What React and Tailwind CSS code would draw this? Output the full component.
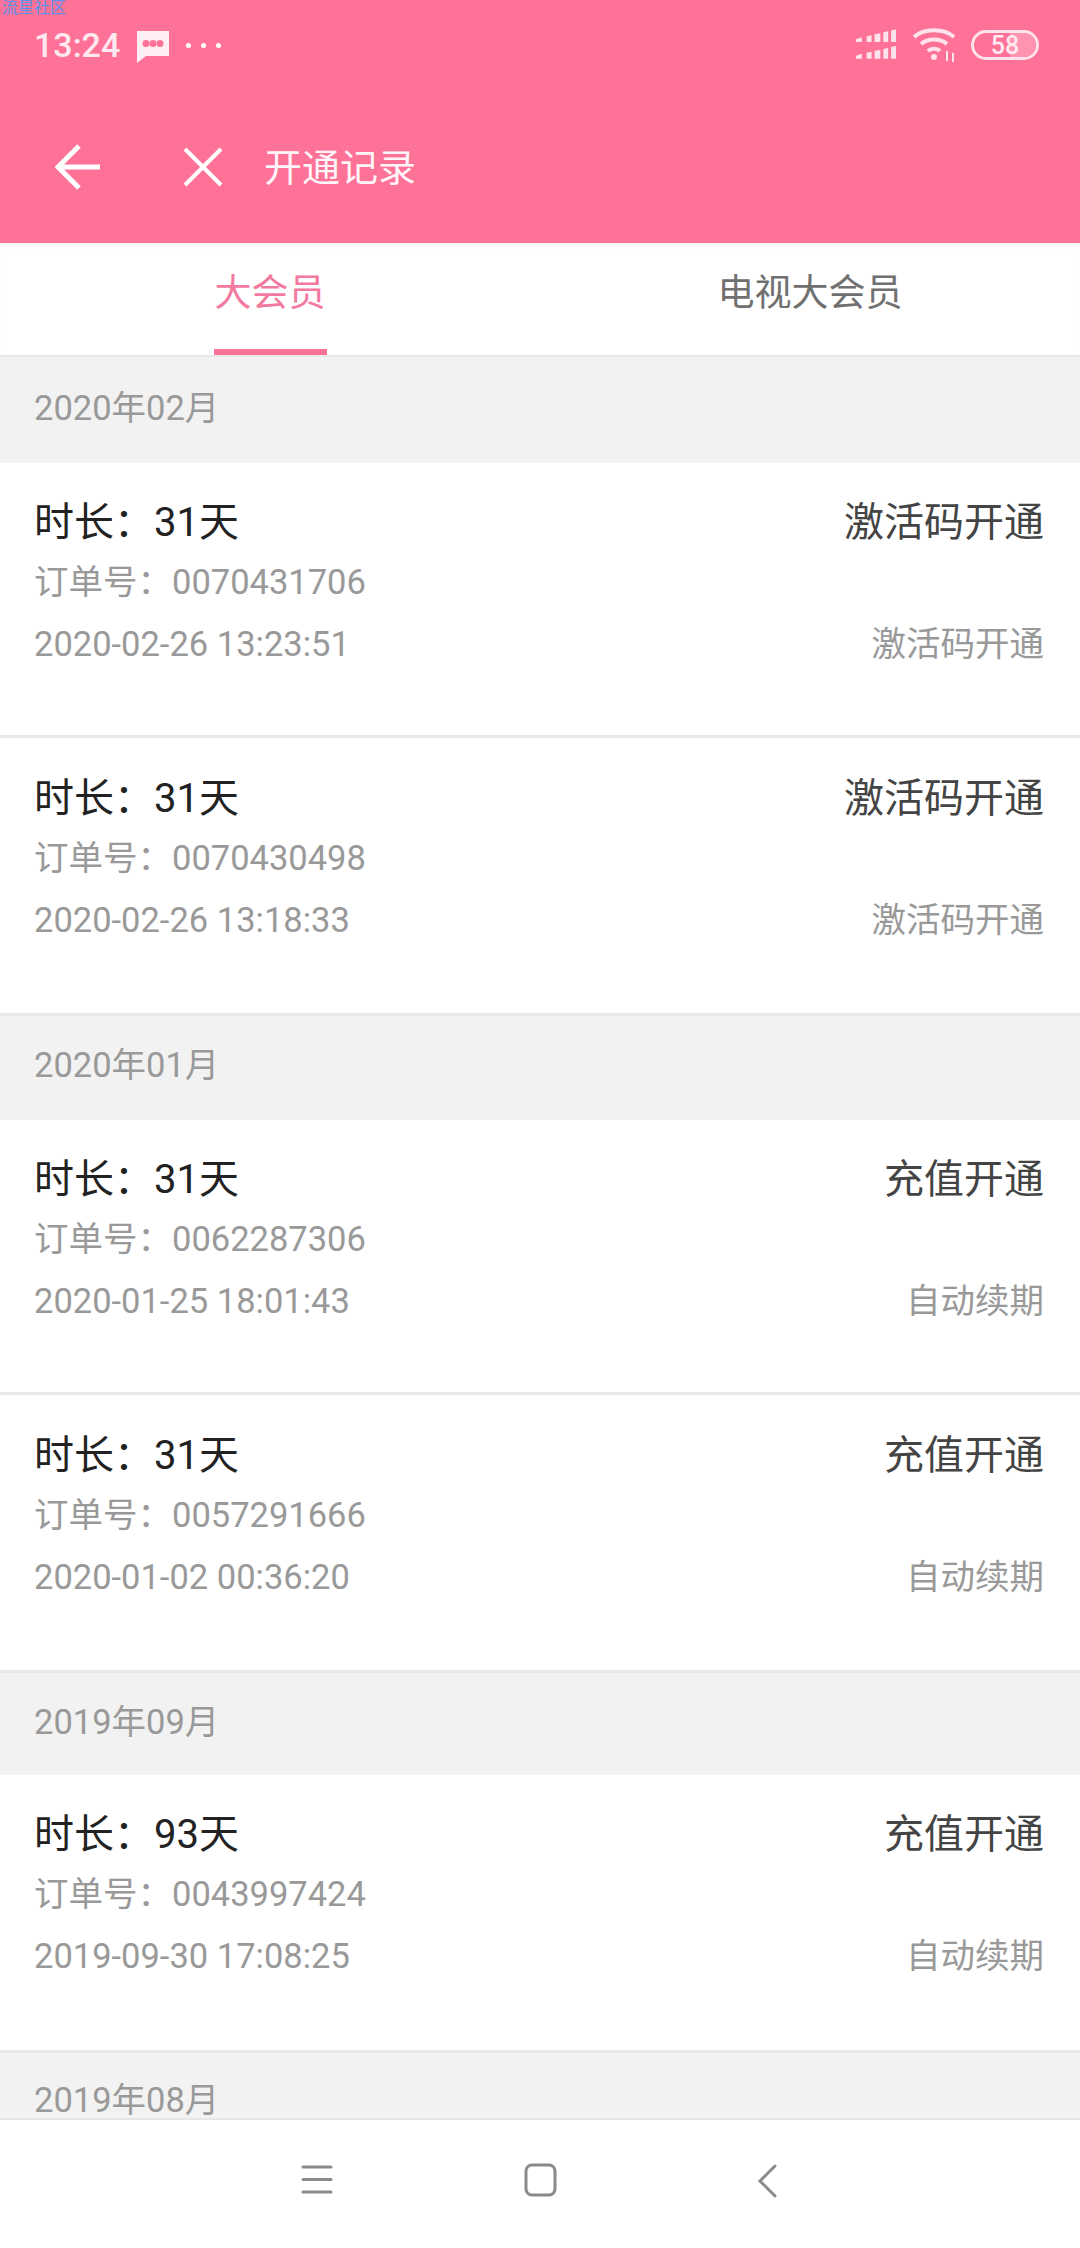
import React from 'react';

const FONT = "font-['Roboto','Noto_Sans_CJK_SC',sans-serif]";

const sections = [
  {
    month: '2020年02月',
    head: 'h-[106px] pt-[30px]',
    rows: [
      { days: '31', order: '0070431706', time: '2020-02-26 13:23:51', type: '激活码开通', sub: '激活码开通' },
      { days: '31', order: '0070430498', time: '2020-02-26 13:18:33', type: '激活码开通', sub: '激活码开通' },
    ],
  },
  {
    month: '2020年01月',
    head: 'h-[104px] pt-[28px]',
    rows: [
      { days: '31', order: '0062287306', time: '2020-01-25 18:01:43', type: '充值开通', sub: '自动续期' },
      { days: '31', order: '0057291666', time: '2020-01-02 00:36:20', type: '充值开通', sub: '自动续期' },
    ],
  },
  {
    month: '2019年09月',
    head: 'h-[102px] pt-[28px]',
    rows: [
      { days: '93', order: '0043997424', time: '2019-09-30 17:08:25', type: '充值开通', sub: '自动续期' },
    ],
  },
];

function Signal() {
  return (
    <svg width="40" height="32" viewBox="0 0 41 32" fill="#ffe3ec">
      <path d="M0 10 L6 8 V13 H0 Z M11 7 L16 6 V13 H11 Z M19 5 L25 4 V13 H19 Z M28 3 L33 2 V13 H28 Z M36 1 L41 0 V13 H36 Z" />
      <path d="M0 27 L6 25 V30 H0 Z M11 24 L16 23 V30 H11 Z M19 22 L25 21 V30 H19 Z M28 20 L33 19 V30 H28 Z M36 18 L41 17 V30 H36 Z" />
    </svg>
  );
}

function Wifi() {
  return (
    <svg width="44" height="34" viewBox="0 0 44 34" fill="none" stroke="#ffe3ec" strokeWidth="4">
      <path d="M2 9 C12 0 32 0 42 9" />
      <path d="M9 16 C16 10 28 10 35 16" />
      <path d="M16 23 C19 20 25 20 28 23" />
      <circle cx="22" cy="29" r="3" fill="#ffe3ec" stroke="none" />
      <path d="M35 23 V33 M41 25 V34" strokeWidth="2" />
    </svg>
  );
}

function Row({ row, index, count }) {
  // first row of a pair sits a bit shorter than the second one
  const shell = count > 1 && index === 0 ? 'h-[275px] pt-[35px]' : count > 1 ? 'h-[278px] pt-[36px]' : 'h-[278px] pt-[35px]';
  return (
    <div className={`${shell} bg-white border-b-[3px] border-[#e8e8e8] pl-[34px] pr-[36px]`}>
      <div className="flex justify-between items-center h-[50px] text-[40px] leading-[50px]">
        <span className="text-[#222222]">时长：{row.days}天</span>
        <span className="text-[#444444]">{row.type}</span>
      </div>
      <div className="h-[42px] mt-[13px] text-[34.5px] leading-[42px] text-[#999999]">订单号：{row.order}</div>
      <div className="flex justify-between items-center h-[42px] mt-[20px] text-[34.5px] leading-[42px] text-[#999999]">
        <span>{row.time}</span>
        <span>{row.sub}</span>
      </div>
    </div>
  );
}

function SectionHead({ month, className }) {
  return (
    <div className={`${className} bg-[#f2f2f2] px-[34px] text-[34.5px] leading-[42px] text-[#999999]`}>{month}</div>
  );
}

export default function App() {
  return (
    <div className={`relative w-[1080px] h-[2248px] overflow-hidden bg-white flex flex-col ${FONT}`}>
      <span className="absolute left-[2px] top-0 text-[16px] leading-[16px] text-[#5b8fe8]">流星社区</span>

      <div className="h-[243px] shrink-0 bg-[#fe7297] text-white">
        <div className="h-[90px] flex items-center pl-[34px] pr-[41px]">
          <span className="text-[34px] font-medium text-[#ffe9f0] w-[84px]">13:24</span>
          <svg className="ml-[18px] mt-[4px]" width="34" height="32" viewBox="0 0 34 32">
            <path d="M1 0 H33 V25 H10 L1 32 Z" fill="#ffeef3" />
            <circle cx="10" cy="12.5" r="3.5" fill="#fe7297" />
            <circle cx="17" cy="12.5" r="3.5" fill="#fe7297" />
            <circle cx="24" cy="12.5" r="3.5" fill="#fe7297" />
          </svg>
          <div className="ml-[16px] flex gap-[10px]">
            <span className="w-[5px] h-[5px] rounded-full bg-white" />
            <span className="w-[5px] h-[5px] rounded-full bg-white" />
            <span className="w-[5px] h-[5px] rounded-full bg-white" />
          </div>
          <div className="ml-auto flex items-center">
            <Signal />
            <div className="ml-[16px]"><Wifi /></div>
            <div className="ml-[15px] relative w-[68px] h-[30px] rounded-full border-[3px] border-[#ffe3ec] flex items-center justify-center overflow-hidden">
              <span className="absolute left-[58%] top-0 bottom-0 right-0 bg-[#ff93b0]" />
              <span className="relative text-[25px] leading-none font-medium text-[#ffe9f0]">58</span>
            </div>
          </div>
        </div>
        <div className="h-[153px] flex items-center">
          <svg className="ml-[55px]" width="46" height="46" viewBox="0 0 46 46" fill="none" stroke="white" strokeWidth="5">
            <path d="M45 23 H4 M24 2 L3 23 L24 44" />
          </svg>
          <svg className="ml-[82px]" width="40" height="40" viewBox="0 0 40 40" fill="none" stroke="white" strokeWidth="4">
            <path d="M2 2 L38 38 M38 2 L2 38" />
          </svg>
          <span className="ml-[41px] mt-[4px] text-[38px] text-[#fff5f8]">开通记录</span>
        </div>
      </div>

      <div className="h-[114px] shrink-0 bg-white border-b-2 border-[#e8e8e8] flex shadow-[inset_0_6px_6px_-4px_rgba(0,0,0,0.06)]">
        <div className="w-[540px] flex justify-center">
          <div className="relative w-[113px] h-[112px] flex justify-center pt-[29px] text-[37px] leading-[44px] text-[#f27aa1] whitespace-nowrap">
            大会员
            <span className="absolute left-0 right-0 bottom-0 h-[6px] bg-[#fe7297]" />
          </div>
        </div>
        <div className="w-[540px] flex justify-center pt-[29px] text-[37px] leading-[44px] text-[#707070]">电视大会员</div>
      </div>

      <div className="flex-1 min-h-0 overflow-hidden">
        {sections.map((s) => (
          <div key={s.month}>
            <SectionHead month={s.month} className={s.head} />
            {s.rows.map((r, i) => <Row key={r.order} row={r} index={i} count={s.rows.length} />)}
          </div>
        ))}
        <SectionHead month="2019年08月" className="h-[104px] pt-[26px]" />
      </div>

      <div className="h-[130px] shrink-0 bg-white border-t-2 border-[#e6e6e6] relative">
        <svg className="absolute left-[300px] top-[42px]" width="34" height="34" viewBox="0 0 34 34" stroke="#8a8a8a" strokeWidth="3" strokeLinecap="round">
          <path d="M3 5 H31 M3 17.5 H31 M3 30 H31" />
        </svg>
        <svg className="absolute left-[524px] top-[43px]" width="34" height="34" viewBox="0 0 34 34" fill="none" stroke="#8a8a8a" strokeWidth="3">
          <rect x="2" y="2" width="29" height="30" rx="6" />
        </svg>
        <svg className="absolute left-[755px] top-[44px]" width="24" height="34" viewBox="0 0 24 34" fill="none" stroke="#8a8a8a" strokeWidth="3" strokeLinecap="round">
          <path d="M20 2 L5 17 L20 32" />
        </svg>
      </div>
    </div>
  );
}
